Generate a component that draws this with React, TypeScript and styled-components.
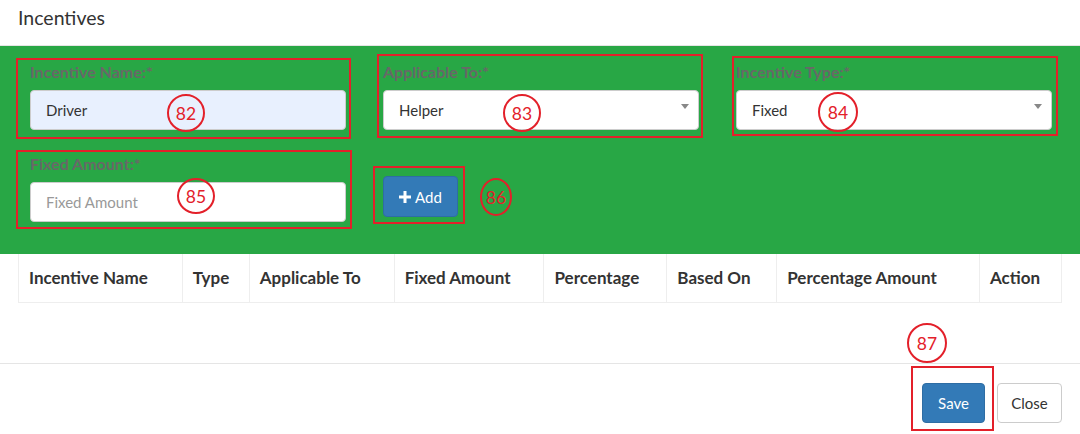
import React from "react";
import styled, { createGlobalStyle } from "styled-components";

const GlobalStyle = createGlobalStyle`
  html, body { margin: 0; padding: 0; background: #fff; }
  body { font-family: Lato, "Open Sans", sans-serif; color: #333; }
  * { box-sizing: border-box; }
`;

const Frame = styled.div`
  position: relative;
  width: 1080px;
  height: 434px;
  overflow: hidden;
  background: #fff;
`;

const Header = styled.div`
  height: 46px;
  padding: 0 18px;
  display: flex;
  align-items: center;
  border-bottom: 1px solid #e5e5e5;
  padding-bottom: 10px;
`;

const Title = styled.h4`
  margin: 0;
  font-size: 19.5px;
  font-weight: 400;
  color: #333;
`;

const GreenPanel = styled.div`
  background: #28a745;
  padding: 16px 0 32px 30px;
  display: grid;
  grid-template-columns: 316px 316px 316px;
  column-gap: 37px;
  row-gap: 24px;
`;

const FormGroup = styled.div`
  display: flex;
  flex-direction: column;
`;

const Label = styled.label`
  font-size: 16px;
  font-weight: 700;
  color: #686868;
  line-height: 20px;
  margin-bottom: 8px;
`;

const Input = styled.div<{ $autofill?: boolean; $placeholder?: boolean }>`
  position: relative;
  height: 40px;
  border-radius: 4px;
  border: 1px solid #ccc;
  background: ${(p) => (p.$autofill ? "#e8f0fe" : "#fff")};
  color: ${(p) => (p.$placeholder ? "#999" : "#333")};
  font-size: 15px;
  display: flex;
  align-items: center;
  padding-left: 15px;
`;

const Caret = styled.span`
  position: absolute;
  right: 9px;
  top: 13px;
  width: 0;
  height: 0;
  border-left: 4px solid transparent;
  border-right: 4px solid transparent;
  border-top: 5px solid #888;
`;

const AddCell = styled.div`
  padding-top: 22px;
`;

const AddButton = styled.button`
  width: 75px;
  height: 41px;
  border-radius: 4px;
  border: 1px solid #2e6da4;
  background: #337ab7;
  color: #fff;
  font-family: inherit;
  font-size: 15px;
  display: flex;
  align-items: center;
  justify-content: center;
  gap: 4px;
  padding: 0;
`;

const TableWrap = styled.div`
  padding: 0 18px;
  height: 110px;
  border-bottom: 1px solid #e5e5e5;
`;

const Table = styled.table`
  width: 1044px;
  border-collapse: collapse;
`;

const Th = styled.th<{ $w: number }>`
  width: ${(p) => p.$w}px;
  height: 48px;
  text-align: left;
  padding: 0 10px;
  font-size: 17px;
  font-weight: 700;
  color: #333;
  border-left: 1px solid #eee;
  border-right: 1px solid #eee;
  border-bottom: 1px solid #eee;
  white-space: nowrap;
`;

const Footer = styled.div`
  display: flex;
  justify-content: flex-end;
  gap: 12px;
  padding: 19px 18px 0 0;
`;

const Button = styled.button<{ $primary?: boolean; $w: number }>`
  width: ${(p) => p.$w}px;
  height: 40px;
  border-radius: 4px;
  font-family: inherit;
  font-size: 15px;
  padding: 0;
  border: 1px solid ${(p) => (p.$primary ? "#2e6da4" : "#ccc")};
  background: ${(p) => (p.$primary ? "#337ab7" : "#fff")};
  color: ${(p) => (p.$primary ? "#fff" : "#333")};
`;

const Box = styled.div`
  position: absolute;
  border: 2px solid #e3202a;
  pointer-events: none;
`;

const Circle = styled.div`
  position: absolute;
  border: 2px solid #e3202a;
  border-radius: 50%;
  color: #e3202a;
  font-size: 17.5px;
  display: flex;
  align-items: center;
  justify-content: center;
  pointer-events: none;
`;

const boxes = [
  [16, 58, 351, 139],
  [377, 54, 703, 138],
  [732, 56, 1058, 136],
  [16, 150, 352, 229],
  [373, 166, 465, 224],
  [911, 366, 994, 431],
];

const circles: [string, number, number, number, number][] = [
  ["82", 186, 113, 38, 38],
  ["83", 522, 113, 38, 38],
  ["84", 838, 112, 40, 40],
  ["85", 196, 196, 38, 36],
  ["86", 496, 197, 32, 38],
  ["87", 927, 343, 40, 40],
];

const cols: [string, number][] = [
  ["Incentive Name", 164],
  ["Type", 67],
  ["Applicable To", 145],
  ["Fixed Amount", 150],
  ["Percentage", 123],
  ["Based On", 110],
  ["Percentage Amount", 203],
  ["Action", 82],
];

const PlusIcon = () => (
  <svg width="12" height="12" viewBox="0 0 12 12">
    <path d="M4.5 0h3v4.5H12v3H7.5V12h-3V7.5H0v-3h4.5z" fill="#fff" />
  </svg>
);

export default function App() {
  return (
    <Frame>
      <GlobalStyle />
      <Header>
        <Title>Incentives</Title>
      </Header>
      <GreenPanel>
        <FormGroup>
          <Label>Incentive Name:*</Label>
          <Input $autofill>Driver</Input>
        </FormGroup>
        <FormGroup>
          <Label>Applicable To:*</Label>
          <Input>
            Helper
            <Caret />
          </Input>
        </FormGroup>
        <FormGroup>
          <Label>Incentive Type:*</Label>
          <Input>
            Fixed
            <Caret />
          </Input>
        </FormGroup>
        <FormGroup>
          <Label>Fixed Amount:*</Label>
          <Input $placeholder>Fixed Amount</Input>
        </FormGroup>
        <AddCell>
          <AddButton>
            <PlusIcon />
            Add
          </AddButton>
        </AddCell>
      </GreenPanel>
      <TableWrap>
        <Table>
          <thead>
            <tr>
              {cols.map(([c, w]) => (
                <Th key={c} $w={w}>
                  {c}
                </Th>
              ))}
            </tr>
          </thead>
        </Table>
      </TableWrap>
      <Footer>
        <Button $primary $w={63}>
          Save
        </Button>
        <Button $w={65}>Close</Button>
      </Footer>
      {boxes.map(([x1, y1, x2, y2], i) => (
        <Box
          key={i}
          style={{ left: x1, top: y1, width: x2 - x1, height: y2 - y1 }}
        />
      ))}
      {circles.map(([t, cx, cy, w, h]) => (
        <Circle
          key={t}
          style={{ left: cx - w / 2, top: cy - h / 2, width: w, height: h }}
        >
          {t}
        </Circle>
      ))}
    </Frame>
  );
}
